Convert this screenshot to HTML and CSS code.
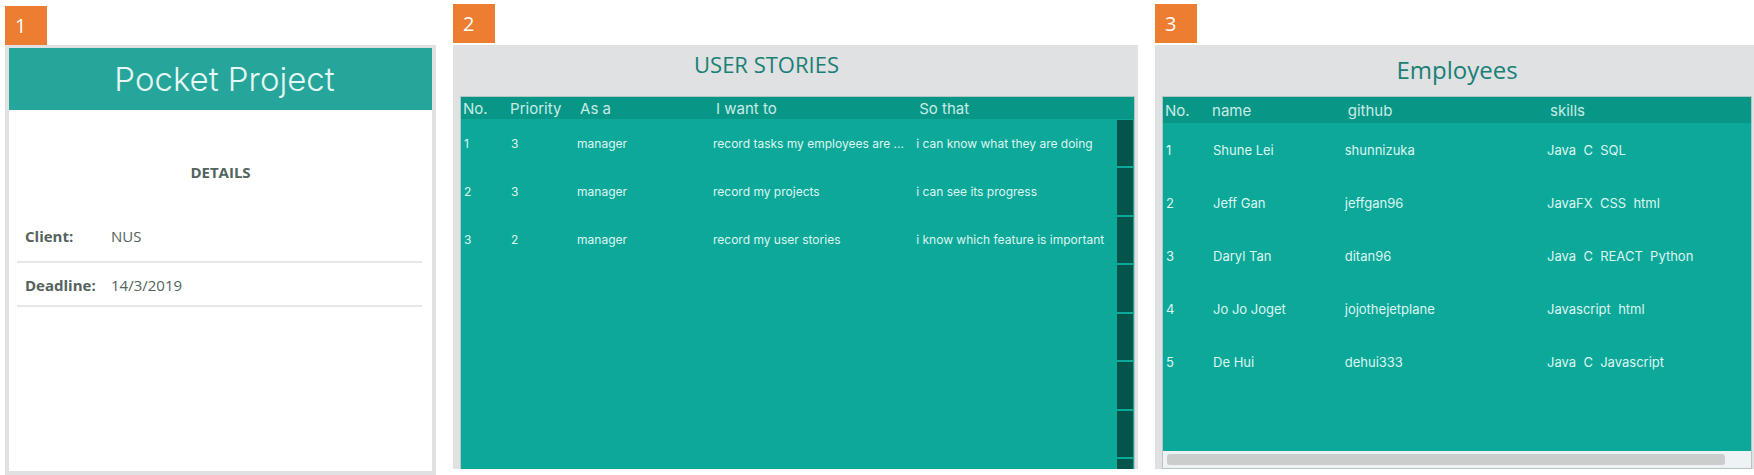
FILE: index.html
```html
<!DOCTYPE html>
<html lang="en">
<head>
<meta charset="utf-8">
<title>Pocket Project</title>
<link rel="stylesheet" href="styles.css">
</head>
<body>
<main class="board">
  <section class="column column-project">
    <span class="badge">1</span>
    <div class="project">
      <h1 class="project-title">Pocket Project</h1>
      <h2 class="project-subtitle">DETAILS</h2>
      <dl class="details">
        <div class="detail detail-client"><dt>Client:</dt><dd>NUS</dd></div>
        <div class="detail"><dt>Deadline:</dt><dd>14/3/2019</dd></div>
      </dl>
    </div>
  </section>

  <section class="column column-list">
    <span class="badge">2</span>
    <div class="panel">
      <h2 class="panel-title panel-title-stories">USER STORIES</h2>
      <div class="sheet sheet-stories">
        <table class="grid stories">
          <colgroup><col class="s-no"><col class="s-priority"><col class="s-as"><col class="s-want"><col></colgroup>
          <thead>
            <tr><th>No.</th><th>Priority</th><th class="inset">As a</th><th class="inset">I want to</th><th class="inset">So that</th></tr>
          </thead>
          <tbody>
            <tr><td>1</td><td>3</td><td>manager</td><td>record tasks my employees are ...</td><td>i can know what they are doing</td></tr>
            <tr><td>2</td><td>3</td><td>manager</td><td>record my projects</td><td>i can see its progress</td></tr>
            <tr><td>3</td><td>2</td><td>manager</td><td>record my user stories</td><td>i know which feature is important</td></tr>
          </tbody>
        </table>
        <div class="rail" aria-hidden="true"><i></i><i></i><i></i><i></i><i></i><i></i><i></i><i class="rail-end"></i></div>
      </div>
    </div>
  </section>

  <section class="column column-list">
    <span class="badge">3</span>
    <div class="panel panel-employees">
      <h2 class="panel-title panel-title-employees">Employees</h2>
      <div class="sheet sheet-employees">
        <table class="grid employees">
          <colgroup><col class="e-no"><col class="e-name"><col class="e-github"><col></colgroup>
          <thead>
            <tr><th>No.</th><th>name</th><th class="inset">github</th><th class="inset">skills</th></tr>
          </thead>
          <tbody>
            <tr><td>1</td><td>Shune Lei</td><td>shunnizuka</td><td>Java  C  SQL</td></tr>
            <tr><td>2</td><td>Jeff Gan</td><td>jeffgan96</td><td>JavaFX  CSS  html</td></tr>
            <tr><td>3</td><td>Daryl Tan</td><td>ditan96</td><td>Java  C  REACT  Python</td></tr>
            <tr><td>4</td><td>Jo Jo Joget</td><td>jojothejetplane</td><td>Javascript  html</td></tr>
            <tr><td>5</td><td>De Hui</td><td>dehui333</td><td>Java  C  Javascript</td></tr>
          </tbody>
        </table>
        <div class="scrollbar" aria-hidden="true"><div class="thumb"></div></div>
      </div>
    </div>
  </section>
</main>
</body>
</html>
```
FILE: styles.css
```css
* {
  box-sizing: border-box;
}

body {
  margin: 0;
  background: #fff;
  font-family: "Open Sans", "Noto Sans", sans-serif;
}

h1, h2, dl, dd {
  margin: 0;
  font-weight: 400;
}

.board {
  display: grid;
  grid-template-columns: minmax(0, 431fr) minmax(0, 685fr) minmax(0, 599fr);
  column-gap: 17px;
  min-height: 100vh;
  padding-left: 5px;
}

.column {
  display: flex;
  flex-direction: column;
}

.column-project {
  padding-top: 6px;
}

.column-list {
  gap: 2px;
  padding: 4px 0 6px;
}

.badge {
  width: 42px;
  height: 39px;
  padding-left: 10px;
  background: #ed7d31;
  color: #fff;
  font-size: 20px;
  line-height: 39px;
}

/* Project details */

.project {
  flex: 1;
  border: 4px solid #dfe1e3;
  border-top-width: 3px;
  background: #fff;
  color: #53635e;
}

.project-title {
  padding-left: 8px;
  background: #26a69a;
  color: #e6f7f5;
  font-family: Inter, sans-serif;
  font-size: 33px;
  font-weight: 300;
  line-height: 62px;
  text-align: center;
}

.project-subtitle {
  padding-top: 50px;
  font-size: 15px;
  font-weight: 700;
  line-height: 24px;
  text-align: center;
}

.details {
  margin: 33px 10px 0 8px;
  font-size: 15px;
}

.detail {
  display: grid;
  grid-template-columns: 86px 1fr;
  padding: 11px 0 9px 8px;
  border-bottom: 2px solid #e6e7ea;
  line-height: 22px;
}

.detail-client {
  padding: 8px 0 14px 8px;
}

.detail dt {
  font-weight: 700;
}

/* List panels */

.panel {
  display: flex;
  flex: 1;
  flex-direction: column;
  padding: 0 3px 0 7px;
  background: #dfe1e3;
}

.panel-employees {
  padding-right: 2px;
}

.panel-title {
  height: 51px;
  color: #1a7f74;
  text-align: center;
}

.panel-title-stories {
  padding-right: 62px;
  font-size: 22px;
  line-height: 38px;
}

.panel-title-employees {
  font-size: 24px;
  line-height: 50px;
}

.sheet {
  display: grid;
  flex: 1;
  border: 1px solid #b4c6c4;
  background: #0ca99a;
}

.sheet-stories {
  border-bottom: 0;
}

.sheet-employees {
  grid-template-rows: 1fr auto;
}

.grid {
  grid-area: 1 / 1;
  align-self: start;
  width: 100%;
  border-collapse: collapse;
  table-layout: fixed;
  color: #dff5f1;
  font-family: Inter, sans-serif;
  white-space: pre;
}

.grid th,
.grid td {
  padding: 0 0 0 3px;
  text-align: left;
}

.grid th {
  padding-left: 2px;
  background: #089786;
  color: #c9ebe6;
  font-size: 15px;
  font-weight: 400;
}

.grid .inset {
  padding-left: 6px;
}

.stories td {
  height: 48px;
  font-size: 12px;
}

.employees td {
  height: 53px;
  font-size: 13px;
}

.stories th { height: 22px; }
.employees th { height: 26px; }

.s-no { width: 7%; }
.s-priority { width: 9.8%; }
.s-as { width: 20.2%; }
.s-want { width: 30.2%; }

.e-no { width: 8%; }
.e-name { width: 22.4%; }
.e-github { width: 34.4%; }

.rail {
  display: flex;
  grid-area: 1 / 1;
  flex-direction: column;
  gap: 2px;
  justify-self: end;
  width: 16px;
  margin: 23px 1px 0 0;
}

.rail i {
  flex: 1;
  background: #05544b;
}

.rail .rail-end {
  flex: 0 0 10px;
}

.scrollbar {
  height: 17px;
  padding: 3px 26px 3px 4px;
  background: #eef2f5;
}

.thumb {
  height: 11px;
  border-radius: 3px;
  background: #cbcccc;
}
```
